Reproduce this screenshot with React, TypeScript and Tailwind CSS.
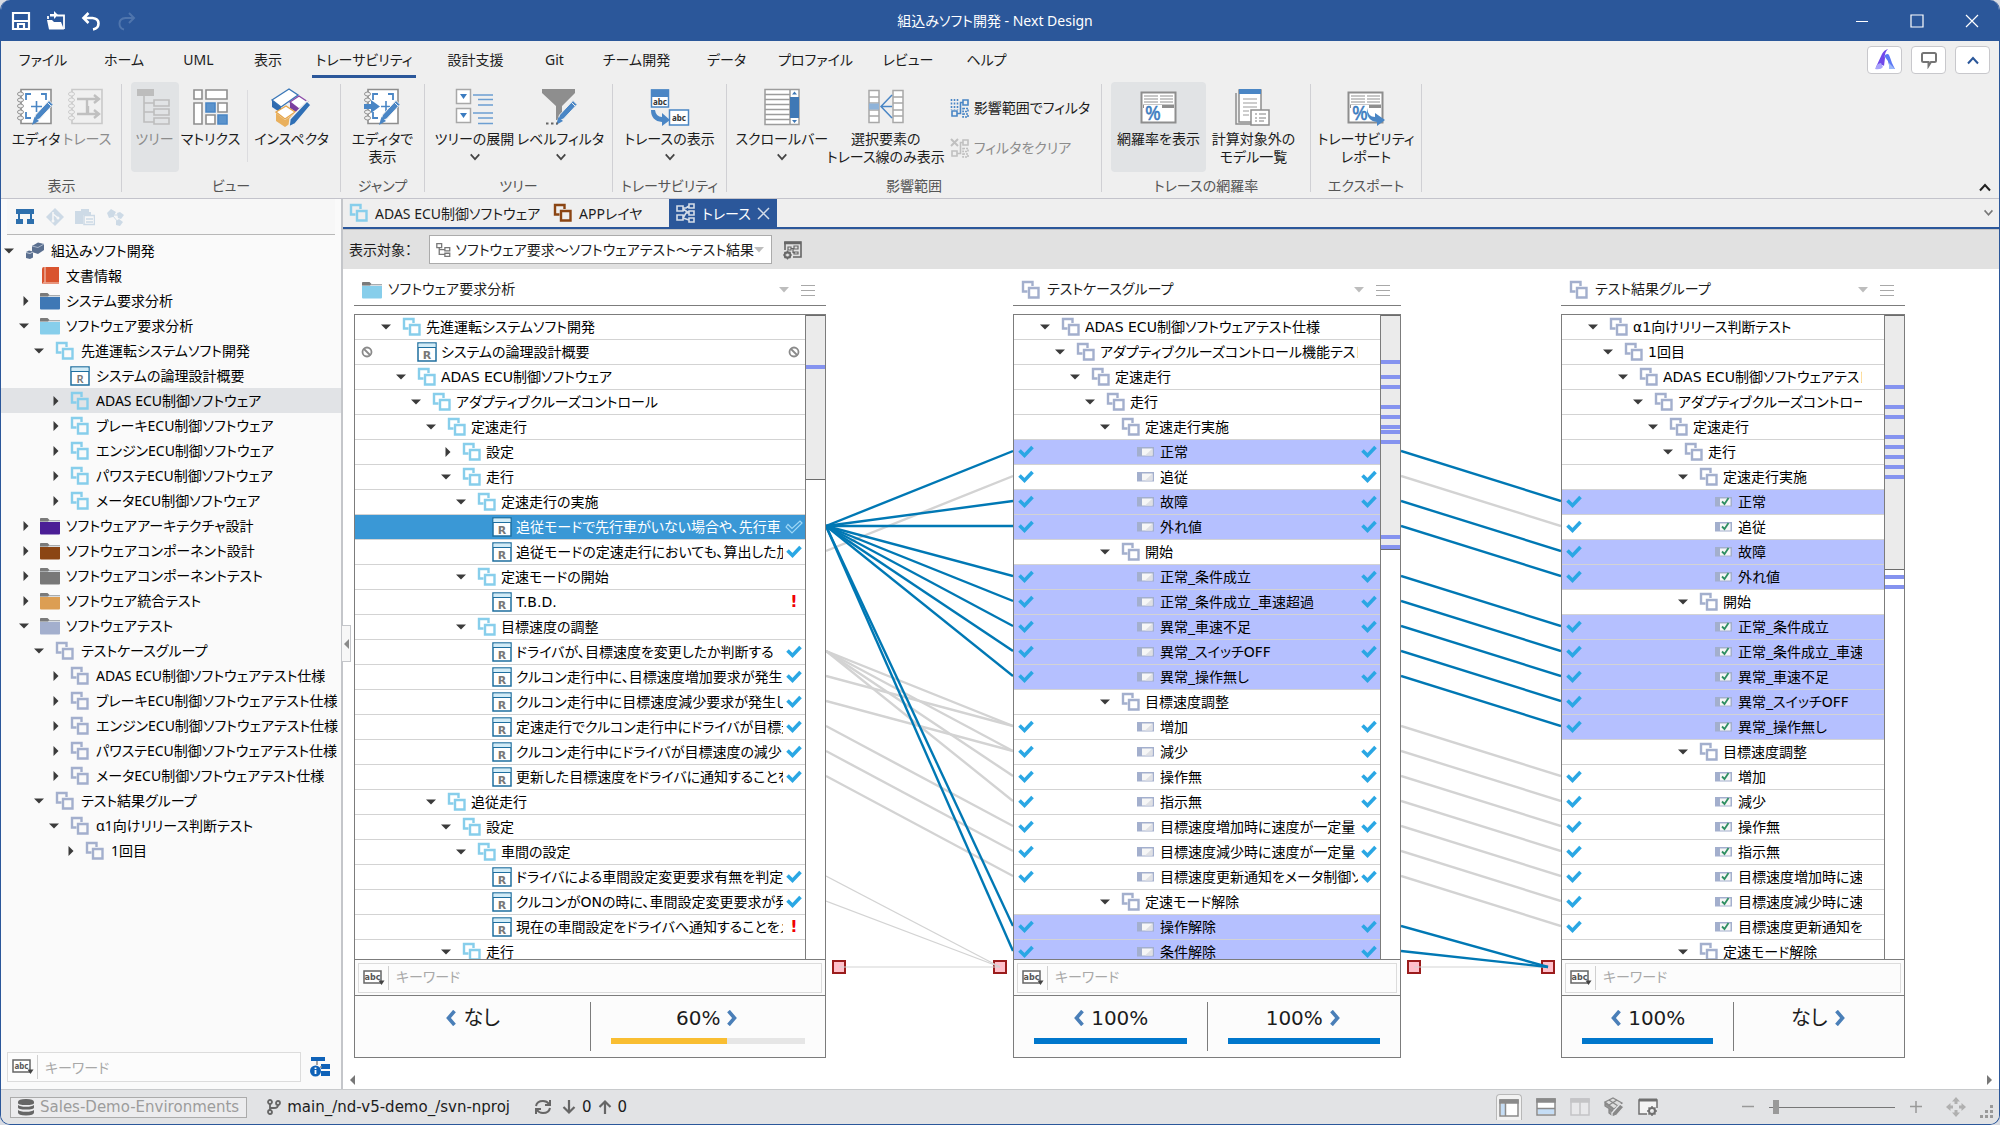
import type { ReactNode } from "react";
import { clsx } from "clsx";

type Icon = "model" | "group" | "brown" | "req" | "case" | "result" | "book" | "cubes" | "folder";
type Arrow = "open" | "closed" | "none";

type NavItem = { level: number; icon: Icon; label: string; arrow: Arrow; color?: string; selected?: boolean };

type Row = {
  level: number;
  icon: Icon;
  label: string;
  arrow?: Arrow;
  left?: Mark;
  right?: Mark;
  tone?: "selected" | "related";
};
type Mark = "check" | "outline" | "alert" | "skip";

/* ---------- small glyphs ---------- */

function Triangle({ arrow }: { arrow: Arrow }) {
  return (
    <span className={clsx("flex w-4 shrink-0 justify-center", arrow === "closed" && "pl-[3px]")}>
      {arrow === "open" && (
        <svg width="10" height="6" viewBox="0 0 10 6" aria-hidden="true">
          <path d="M0 0.5h10L5 5.5z" fill="#3b3b3b" />
        </svg>
      )}
      {arrow === "closed" && (
        <svg width="6" height="10" viewBox="0 0 6 10" aria-hidden="true">
          <path d="M0.5 0v10L5.5 5z" fill="#3b3b3b" />
        </svg>
      )}
    </span>
  );
}

function ModelIcon({ color }: { color: string }) {
  return (
    <svg width="20" height="20" viewBox="0 0 20 20" fill="none" stroke={color} strokeWidth="2.400" aria-hidden="true">
      <path d="M6.500 11.500H2V2h9.500v4" />
      <path d="M8 8h9.500v9.500H8z" />
    </svg>
  );
}

function FolderIcon({ color }: { color: string }) {
  return (
    <svg width="20" height="18" viewBox="0 0 20 18" aria-hidden="true">
      <path d="M0 1.500Q0 1 1 1h6.500l2 2H20v4H0z" fill="#7a7a7a" />
      <path d="M0 4.500h8l1-1H20V6H0z" fill="#d8dde2" />
      <path d="M0 5h20v11.500q0 1-1 1H1q-1 0-1-1z" fill={color} />
    </svg>
  );
}

function ItemIcon({ icon, color }: { icon: Icon; color?: string }) {
  switch (icon) {
    case "model":
      return <ModelIcon color="#87ceeb" />;
    case "group":
      return <ModelIcon color="#a3afcd" />;
    case "brown":
      return <ModelIcon color="#8b4513" />;
    case "folder":
      return <FolderIcon color={color ?? "#87ceeb"} />;
    case "book":
      return (
        <svg width="20" height="20" viewBox="0 0 20 20" aria-hidden="true">
          <path d="M2 3q0-2 2-2h15v17H4q-2 0-2-1z" fill="#d9542f" />
          <path d="M5 1v15.500M3 17h16" stroke="#f7d6cb" fill="none" />
        </svg>
      );
    case "cubes":
      return (
        <svg width="20" height="18" viewBox="0 0 20 18" aria-hidden="true">
          <path d="M7 4l6-3.500 6 1.500v6l-6 4-6-2z" fill="#5a6f8f" />
          <path d="M7 4l6 1.500L19 2" stroke="#a9b6ca" fill="none" />
          <path d="M1 10l3-1.500 4 1v6L5 17l-4-1z" fill="#5a6f8f" />
          <path d="M1 10.500l4 1 3-1.500" stroke="#c6cfdd" fill="none" />
        </svg>
      );
    case "req":
      return (
        <svg width="20" height="20" viewBox="0 0 20 20" aria-hidden="true">
          <path d="M1 1h18v18H1z" fill="#fff" stroke="#1f6f9f" strokeWidth="1.500" />
          <path d="M1.500 1.500h17v3.500h-17z" fill="#d3ecf7" />
          <path d="M1 5.500h18" stroke="#1f6f9f" />
          <text x="10" y="16.500" fontSize="11" fontWeight="600" textAnchor="middle" fill="#777">
            R
          </text>
        </svg>
      );
    case "case":
    case "result":
      return (
        <svg width="20" height="20" viewBox="0 0 20 20" aria-hidden="true">
          <path d="M1 5h17v9.500H1z" fill="#a3afcd" />
          <path d="M6 6.500h10.500v7H6z" fill="#f6f6f6" />
          {icon === "case" ? (
            <path d="M16.500 6.500v7H9z" fill="#dfe0e4" />
          ) : (
            <path d="M8 9.500l2.500 2.500 4-6" stroke="#2f8f62" strokeWidth="1.800" fill="none" />
          )}
        </svg>
      );
  }
}

function MarkIcon({ mark }: { mark: Mark }) {
  if (mark === "alert") return <b className="text-[16px] leading-none text-[#f00000]">!</b>;
  if (mark === "skip")
    return (
      <svg width="12" height="12" viewBox="0 0 12 12" fill="none" stroke="#8a8a8a" strokeWidth="1.800" aria-hidden="true">
        <circle cx="6" cy="6" r="4.500" />
        <path d="M3 3l6 6" />
      </svg>
    );
  if (mark === "outline")
    return (
      <svg width="18" height="14" viewBox="0 0 18 14" fill="none" aria-hidden="true">
        <path d="M1 7l2-2.500 4 4L15 1l2 2L7 13z" stroke="#9fd8f6" strokeWidth="1.200" />
      </svg>
    );
  return (
    <svg width="16" height="14" viewBox="0 0 16 14" fill="none" aria-hidden="true">
      <path d="M1.500 5.500l5 5L14.500 2" stroke="#2aa7e4" strokeWidth="3.600" />
    </svg>
  );
}

function Chevron({ dir, color = "#444", size = 14 }: { dir: "up" | "down"; color?: string; size?: number }) {
  return (
    <svg width={size} height={size / 2 + 2} viewBox="0 0 14 9" fill="none" stroke={color} strokeWidth="2" aria-hidden="true">
      <path d={dir === "up" ? "M2 7.500L7 2l5 5.500" : "M2 1.500L7 7l5-5.500"} />
    </svg>
  );
}

function AbcIcon() {
  return (
    <svg width="22" height="16" viewBox="0 0 22 16" aria-hidden="true">
      <path d="M1 1h17v12H1z" fill="#fff" stroke="#666" strokeWidth="1.500" />
      <text x="9.500" y="10" fontSize="8" fontWeight="700" textAnchor="middle" fill="#555">
        abc
      </text>
      <path d="M15.500 10.500h6L18.500 15z" fill="#444" />
    </svg>
  );
}

/* ---------- ribbon drawings ---------- */

function Pencil() {
  return (
    <g>
      <path d="M16.500 33l2-6L32 12.500l4 4L22.500 31z" fill="#4a86c5" stroke="#efefef" />
      <path d="M30.500 14.500l3.500 3.500" stroke="#efefef" />
      <path d="M15 37l2.500-8 4.500 4z" fill="#4a86c5" />
    </g>
  );
}

function Notebook({ faded, children }: { faded?: boolean; children: ReactNode }) {
  const line = faded ? "#c9c9c9" : "#8e8e8e";
  return (
    <svg width="38" height="38" viewBox="0 0 38 38" fill="none" aria-hidden="true">
      <path d="M4 1.500h30v34H4z" fill={faded ? "#f0f0f0" : "#fff"} stroke={line} strokeWidth="1.600" />
      {[5, 11, 17, 23, 29].map((y) => (
        <ellipse key={y} cx="3.500" cy={y + 1} rx="3" ry="2" fill="#efefef" stroke={line} />
      ))}
      {children}
    </svg>
  );
}

const corners = <path d="M9 12V6h5M24 6h5v6M9 24v6h5" stroke="#4a86c5" strokeWidth="1.800" />;

function CoverageIcon({ arrow }: { arrow?: boolean }) {
  return (
    <svg width="38" height="38" viewBox="0 0 38 38" fill="none" aria-hidden="true">
      <path d="M1.500 4.500h34v30h-34z" fill="#fff" stroke="#8e8e8e" strokeWidth="2" />
      <path d="M4 8h14M20 8h13M4 11h14M20 11h13M4 14h14M20 14h13" stroke="#b5b5b5" strokeWidth="1.500" />
      <path d="M3 16.500h31v3.500H3z" fill="#8e8e8e" />
      <path d="M4 17h18v16H4z" fill="#fff" />
      <text x="13" y="32" fontSize="19" textAnchor="middle" fill="#3b7cc0" stroke="#3b7cc0" strokeWidth="0.500">
        %
      </text>
      {arrow && <path d="M20 20q1 9 8 9v-4l10 7-8 6v-4q-11-1-10-14z" fill="#4a86c5" />}
    </svg>
  );
}

const drawings = {
  editor: (
    <Notebook>
      {corners}
      <path d="M19.500 13v11M14 18.500h11" stroke="#4a86c5" strokeWidth="1.600" />
      <Pencil />
    </Notebook>
  ),
  trace: (
    <Notebook faded>
      <path d="M9 11h4M9 26h11v-8M13 11h6v15h10M19 11h10M26 7l5 4-5 4M26 22l5 4-5 4" stroke="#c0c0c0" strokeWidth="2.400" />
    </Notebook>
  ),
  tree: (
    <svg width="38" height="38" viewBox="0 0 38 38" fill="none" stroke="#bdbdbd" strokeWidth="1.600" aria-hidden="true">
      <path d="M1 1h17v7H1z" fill="#bdbdbd" stroke="none" />
      <path d="M8 8v26h10M8 15h10M8 24h10M18 12h15v6H18zM18 21h15v6H18zM18 30h15v6H18z" />
    </svg>
  ),
  matrix: (
    <svg width="38" height="38" viewBox="0 0 38 38" fill="#fff" stroke="#8e8e8e" strokeWidth="1.600" aria-hidden="true">
      <path d="M2 2h8v9H2zM14 2h21v9H14zM2 15h8v21H2zM26 15h9v9h-9zM14 27h9v9h-9z" />
      <path d="M14 15h9v9h-9zM26 27h9v9h-9z" fill="#5b93cc" stroke="#4a86c5" />
    </svg>
  ),
  inspector: (
    <svg width="42" height="40" viewBox="0 0 42 40" strokeWidth="1.400" aria-hidden="true">
      <path d="M1 12L18 1l9 6L10 19z" fill="#fff" stroke="#3b78b8" />
      <path d="M1 12l9 7v6l-9-6z" fill="#2f6bb0" />
      <path d="M19 14l9-6 9 6-9 7z" fill="#fff" stroke="#8a4aa8" />
      <path d="M19 14l9 7v5l-9-6z" fill="#7a3f9e" />
      <path d="M5 24l10-6 9 6-10 7z" fill="#fff" stroke="#e6a64c" />
      <path d="M5 25l9 7v7l-9-6zM14 32l9-6v7l-9 6z" fill="#e9b05d" />
      <path d="M19 31L36 13l4 4-16 19-6 3z" fill="#2f6fb5" stroke="#efefef" />
    </svg>
  ),
  jump: (
    <Notebook>
      {corners}
      <path d="M22 13v11M17 18.500h9" stroke="#4a86c5" strokeWidth="1.600" />
      <path d="M0 16h7v-4l9 6.500-9 6.500v-4H0z" fill="#4a86c5" />
      <Pencil />
    </Notebook>
  ),
  expand: (
    <svg width="40" height="38" viewBox="0 0 40 38" fill="none" aria-hidden="true">
      <path d="M1.500 1.500h14v14h-14zM1.500 20.500h14v14h-14z" fill="#fff" stroke="#a8a8a8" strokeWidth="1.500" />
      <path d="M5 6h7l-3.500 5zM5 25h7l-3.500 5z" fill="#3b7cc0" />
      <path d="M18 7h20M23 11.500h15M23 17h15M18 25h20M23 30h15M23 35.500h15" stroke="#6c9fd2" strokeWidth="1.500" />
    </svg>
  ),
  filter: (
    <svg width="40" height="38" viewBox="0 0 40 38" fill="none" aria-hidden="true">
      <path d="M1 1h33v4L21 18v14h-6V18L1 5z" fill="#8e8e8e" />
      <Pencil />
      <path d="M5 35.500h2.500M10 35.500h2.500M15 35.500h2" stroke="#666" strokeWidth="2" />
    </svg>
  ),
  labels: (
    <svg width="40" height="38" viewBox="0 0 40 38" fill="none" aria-hidden="true">
      <path d="M1.500 2h17v17h-17z" fill="#fff" stroke="#4a86c5" strokeWidth="1.500" />
      <path d="M1 1.500h18V9H1z" fill="#4a86c5" />
      <path d="M19.500 22h19v15h-19z" fill="#fff" stroke="#4a86c5" strokeWidth="1.500" />
      <path d="M1 22h4q1 7 7 7v-4l8 7-8 6v-4Q1 33 1 22z" fill="#4a86c5" />
      <text x="10" y="16.500" fontSize="8" fontWeight="700" textAnchor="middle" fill="#333">
        abc
      </text>
      <text x="29" y="33" fontSize="8" fontWeight="700" textAnchor="middle" fill="#333">
        abc
      </text>
    </svg>
  ),
  scrollbar: (
    <svg width="38" height="38" viewBox="0 0 38 38" fill="#fff" stroke="#9c9c9c" strokeWidth="1.500" aria-hidden="true">
      <path d="M2 1.500h34v35H2zM27 1.500v35M2 6.500h25M2 11.500h25M2 16.500h25M2 21.500h25M2 26.500h25M2 31.500h25" />
      <path d="M27 9h9v21h-9zM29 6.500l2.500-3 2.500 3zM29 32h5l-2.500 3z" fill="#3f78b5" stroke="none" />
    </svg>
  ),
  fan: (
    <svg width="38" height="38" viewBox="0 0 38 38" fill="#fff" stroke="#a8a8a8" strokeWidth="1.500" aria-hidden="true">
      <path d="M2 2.500h10v32H2zM26 2.500h10v32H26zM2 9h10M2 15h10M2 22h10M2 28h10M26 9h10M26 15h10M26 22h10M26 28h10" />
      <path d="M2 15.500h10v6H2z" fill="#8fb3d9" stroke="none" />
      <path d="M25 7L14 18.500 25 30M14 18.500h11" fill="none" stroke="#4a86c5" />
    </svg>
  ),
  coverage: <CoverageIcon />,
  excluded: (
    <svg width="38" height="38" viewBox="0 0 38 38" fill="#fff" stroke="#8e8e8e" strokeWidth="1.500" aria-hidden="true">
      <path d="M1 5v31h27" fill="none" />
      <path d="M4 2h22v32H4z" />
      <path d="M4 1h22v5H4z" fill="#4a86c5" stroke="none" />
      <path d="M8 11h14M8 15h14M8 19h14M8 23h6M8 27h6" stroke="#bdbdbd" />
      <path d="M16 22h18v15H16z" />
      <path d="M20 26h2M24 26h7M20 30h2M24 30h7M20 33h2M24 33h5" stroke="#aaa" />
    </svg>
  ),
  report: <CoverageIcon arrow />,
};

function RangeIcon({ clear }: { clear?: boolean }) {
  const c = clear ? "#c0c0c0" : "#4a86c5";
  return (
    <svg width="20" height="20" viewBox="0 0 20 20" fill="none" stroke={c} strokeWidth="1.600" aria-hidden="true">
      <path d="M13 2h5v5h-5zM2 13h5v5H2zM7 15.500h3.500v-11H13" />
      <path d="M13 10.500h5v3h-5zM13 16h5v3h-5z" strokeDasharray="2 1" />
      {clear ? <path d="M1 1l7 7M8 1L1 8" strokeWidth="2" /> : <path d="M1.500 1v11M4.500 1v11M7.500 1v11" strokeDasharray="2 1.500" />}
    </svg>
  );
}

/* ---------- ribbon ---------- */

function RibbonButton({
  drawing,
  lines,
  width,
  drop,
  active,
  muted,
}: {
  drawing: keyof typeof drawings;
  lines: string[];
  width: string;
  drop?: boolean;
  active?: boolean;
  muted?: boolean;
}) {
  return (
    <button
      type="button"
      className={clsx(
        "flex h-[90px] shrink-0 flex-col items-center rounded pt-[6px] leading-[18px] whitespace-nowrap",
        width,
        active && "bg-[#e1e3e5]",
        muted ? "text-[#8c8c8c]" : "text-[#1c1c1c]",
      )}
    >
      <span className="flex h-[42px] items-start">{drawings[drawing]}</span>
      {lines.map((line) => (
        <span key={line}>{line}</span>
      ))}
      {drop && (
        <span className="flex h-[18px] items-center">
          <Chevron dir="down" size={12} />
        </span>
      )}
    </button>
  );
}

function RibbonGroup({ label, width, children }: { label: string; width: string; children: ReactNode }) {
  return (
    <section aria-label={label} className={clsx("mt-1 flex h-[108px] shrink-0 flex-col border-r border-[#d0d0d4]", width)}>
      <div className="-mt-[2px] flex flex-1 justify-center">{children}</div>
      <p className="text-center leading-3 whitespace-nowrap text-[#555]">{label}</p>
    </section>
  );
}

const menu = [
  { label: "ファイル", width: "w-[84px]" },
  { label: "ホーム", width: "w-[78px]" },
  { label: "UML", width: "w-[71px]" },
  { label: "表示", width: "w-[68px]" },
  { label: "トレーサビリティ", width: "w-[124px]", active: true },
  { label: "設計支援", width: "w-[99px]" },
  { label: "Git", width: "w-[59px]" },
  { label: "チーム開発", width: "w-[105px]" },
  { label: "データ", width: "w-[75px]" },
  { label: "プロファイル", width: "w-[103px]" },
  { label: "レビュー", width: "w-[82px]" },
  { label: "ヘルプ", width: "w-[75px]" },
];

function TitleBar() {
  return (
    <header className="flex h-[41px] shrink-0 items-center bg-[#2b579a] text-white">
      <div className="flex flex-1 items-center gap-[15px] pl-[10px]">
        <button type="button" aria-label="保存">
          <svg width="20" height="20" viewBox="0 0 20 20" fill="none" stroke="#fff" strokeWidth="2.200" aria-hidden="true">
            <path d="M2 2h16v16H2zM2 10h16M7 18v-5h6v5" />
          </svg>
        </button>
        <button type="button" aria-label="開く">
          <svg width="20" height="20" viewBox="0 0 20 20" aria-hidden="true">
            <path d="M2 8V5M11 4.500h7V18" fill="none" stroke="#fff" strokeWidth="1.800" />
            <path d="M1 9h5l2 2h7l3 7.500H3zM4 3h4V0l4 4-4 4V5.500H4z" fill="#fff" />
          </svg>
        </button>
        <button type="button" aria-label="元に戻す">
          <svg width="20" height="20" viewBox="0 0 20 20" fill="none" stroke="#fff" strokeWidth="2.600" aria-hidden="true">
            <path d="M7.500 2L2.500 7l5 5M3 7h8.500q6 .5 6 5.500t-5.500 6" />
          </svg>
        </button>
        <button type="button" aria-label="やり直し" disabled>
          <svg width="20" height="20" viewBox="0 0 20 20" fill="none" stroke="#4f75ad" strokeWidth="2" aria-hidden="true">
            <path d="M13 2l5 5-5 5M17 7H9.500q-6 .5-6 5.500t4.500 6" />
          </svg>
        </button>
      </div>
      <h1 className="whitespace-nowrap">組込みソフト開発 - Next Design</h1>
      <div className="flex flex-1 items-center justify-end gap-[41px] pr-[20px]">
        <button type="button" aria-label="最小化">
          <svg width="14" height="14" viewBox="0 0 14 14" stroke="#fff" strokeWidth="1.200" aria-hidden="true">
            <path d="M1 7.500h12" />
          </svg>
        </button>
        <button type="button" aria-label="最大化">
          <svg width="14" height="14" viewBox="0 0 14 14" fill="none" stroke="#fff" strokeWidth="1.200" aria-hidden="true">
            <path d="M1 1h12v12H1z" />
          </svg>
        </button>
        <button type="button" aria-label="閉じる">
          <svg width="14" height="14" viewBox="0 0 14 14" stroke="#fff" strokeWidth="1.200" aria-hidden="true">
            <path d="M1 1l12 12M13 1L1 13" />
          </svg>
        </button>
      </div>
    </header>
  );
}

function Ribbon() {
  const square = "flex h-[28px] w-[35px] items-center justify-center rounded border border-[#c8c8cc] bg-white";
  return (
    <div className="shrink-0 border-b border-[#c3c3cb]">
      <nav className="flex h-[39px] items-start">
        {menu.map((m) => (
          <a key={m.label} href="#" className={clsx("flex h-[37px] shrink-0 justify-center whitespace-nowrap", m.width)}>
            <span className={clsx("border-b-[3px] px-1 pt-2", m.active ? "border-[#2b579a]" : "border-transparent")}>{m.label}</span>
          </a>
        ))}
        <div className="ml-auto flex gap-[9px] pt-[5px] pr-[9px]">
          <button type="button" aria-label="AI アシスタント" className={square}>
            <svg width="20" height="22" viewBox="0 0 20 22" aria-hidden="true">
              <path d="M7 5q2-4 6-5-4 4-3 9l-1 8q-2-2-4 0-3 2-4 1z" fill="#7048ea" />
              <path d="M10 6q3-2 4 0 1 2 3 8l3 6q-5 0-6-4-1-5-4-8z" fill="#5c78f5" />
              <path d="M0 20q2-6 6-6l2 4q-2 3-8 2z" fill="#a9a4fb" />
              <path d="M14 14l6 6h-6z" fill="#9cb8fa" />
            </svg>
          </button>
          <button type="button" aria-label="コメント" className={square}>
            <svg width="18" height="18" viewBox="0 0 18 18" fill="none" stroke="#757575" strokeWidth="2" aria-hidden="true">
              <path d="M3.500 2h11q1.500 0 1.500 1.500v6q0 1.500-1.500 1.500H11l-2.500 4V11h-5Q2 11 2 9.500v-6Q2 2 3.500 2z" />
            </svg>
          </button>
          <button type="button" aria-label="リボン" className={square}>
            <Chevron dir="up" color="#2b579a" />
          </button>
        </div>
      </nav>
      <div className="flex h-[118px] pl-px">
        <RibbonGroup label="表示" width="w-[120px]">
          <RibbonButton drawing="editor" lines={["エディタ"]} width="w-[51px]" />
          <RibbonButton drawing="trace" lines={["トレース"]} width="w-[51px]" muted />
        </RibbonGroup>
        <RibbonGroup label="ビュー" width="w-[219px]">
          <RibbonButton drawing="tree" lines={["ツリー"]} width="w-[48px]" active muted />
          <RibbonButton drawing="matrix" lines={["マトリクス"]} width="w-[64px]" />
          <div className="mx-1 mt-2 h-[72px] w-px bg-[#dcdcdf]" />
          <RibbonButton drawing="inspector" lines={["インスペクタ"]} width="w-[80px]" />
        </RibbonGroup>
        <RibbonGroup label="ジャンプ" width="w-[84px]">
          <RibbonButton drawing="jump" lines={["エディタで", "表示"]} width="w-[76px]" />
        </RibbonGroup>
        <RibbonGroup label="ツリー" width="w-[188px]">
          <RibbonButton drawing="expand" lines={["ツリーの展開"]} width="w-[84px]" drop />
          <RibbonButton drawing="filter" lines={["レベルフィルタ"]} width="w-[88px]" drop />
        </RibbonGroup>
        <RibbonGroup label="トレーサビリティ" width="w-[114px]">
          <RibbonButton drawing="labels" lines={["トレースの表示"]} width="w-[100px]" drop />
        </RibbonGroup>
        <RibbonGroup label="影響範囲" width="w-[375px]">
          <RibbonButton drawing="scrollbar" lines={["スクロールバー"]} width="w-[88px]" drop />
          <RibbonButton drawing="fan" lines={["選択要素の", "トレース線のみ表示"]} width="w-[120px]" />
          <div className="ml-1 flex flex-col gap-5 pt-[16px] whitespace-nowrap">
            <button type="button" className="flex items-center gap-[4px] leading-5">
              <RangeIcon />
              影響範囲でフィルタ
            </button>
            <button type="button" className="flex items-center gap-[4px] leading-5 text-[#8c8c8c]" disabled>
              <RangeIcon clear />
              フィルタをクリア
            </button>
          </div>
        </RibbonGroup>
        <RibbonGroup label="トレースの網羅率" width="w-[209px]">
          <RibbonButton drawing="coverage" lines={["網羅率を表示"]} width="w-[95px]" active />
          <RibbonButton drawing="excluded" lines={["計算対象外の", "モデル一覧"]} width="w-[95px]" />
        </RibbonGroup>
        <RibbonGroup label="エクスポート" width="w-[111px]">
          <RibbonButton drawing="report" lines={["トレーサビリティ", "レポート"]} width="w-[100px]" />
        </RibbonGroup>
        <button type="button" aria-label="リボンを折りたたむ" className="mt-auto mr-[7px] mb-[6px] ml-auto">
          <Chevron dir="up" color="#222" />
        </button>
      </div>
    </div>
  );
}

/* ---------- navigator ---------- */

const nav: NavItem[] = [
  { level: 0, icon: "cubes", label: "組込みソフト開発", arrow: "open" },
  { level: 1, icon: "book", label: "文書情報", arrow: "none" },
  { level: 1, icon: "folder", color: "#3f78b5", label: "システム要求分析", arrow: "closed" },
  { level: 1, icon: "folder", color: "#87ceeb", label: "ソフトウェア要求分析", arrow: "open" },
  { level: 2, icon: "model", label: "先進運転システムソフト開発", arrow: "open" },
  { level: 3, icon: "req", label: "システムの論理設計概要", arrow: "none" },
  { level: 3, icon: "model", label: "ADAS ECU制御ソフトウェア", arrow: "closed", selected: true },
  { level: 3, icon: "model", label: "ブレーキECU制御ソフトウェア", arrow: "closed" },
  { level: 3, icon: "model", label: "エンジンECU制御ソフトウェア", arrow: "closed" },
  { level: 3, icon: "model", label: "パワステECU制御ソフトウェア", arrow: "closed" },
  { level: 3, icon: "model", label: "メータECU制御ソフトウェア", arrow: "closed" },
  { level: 1, icon: "folder", color: "#4b1e96", label: "ソフトウェアアーキテクチャ設計", arrow: "closed" },
  { level: 1, icon: "folder", color: "#8b4513", label: "ソフトウェアコンポーネント設計", arrow: "closed" },
  { level: 1, icon: "folder", color: "#787878", label: "ソフトウェアコンポーネントテスト", arrow: "closed" },
  { level: 1, icon: "folder", color: "#dc9e53", label: "ソフトウェア統合テスト", arrow: "closed" },
  { level: 1, icon: "folder", color: "#a3afcd", label: "ソフトウェアテスト", arrow: "open" },
  { level: 2, icon: "group", label: "テストケースグループ", arrow: "open" },
  { level: 3, icon: "group", label: "ADAS ECU制御ソフトウェアテスト仕様", arrow: "closed" },
  { level: 3, icon: "group", label: "ブレーキECU制御ソフトウェアテスト仕様", arrow: "closed" },
  { level: 3, icon: "group", label: "エンジンECU制御ソフトウェアテスト仕様", arrow: "closed" },
  { level: 3, icon: "group", label: "パワステECU制御ソフトウェアテスト仕様", arrow: "closed" },
  { level: 3, icon: "group", label: "メータECU制御ソフトウェアテスト仕様", arrow: "closed" },
  { level: 2, icon: "group", label: "テスト結果グループ", arrow: "open" },
  { level: 3, icon: "group", label: "α1向けリリース判断テスト", arrow: "open" },
  { level: 4, icon: "group", label: "1回目", arrow: "closed" },
];

function KeywordBox({ label }: { label: string }) {
  return (
    <div className="flex h-[30px] min-w-0 flex-1 items-center border border-[#dcdcdc] bg-[#fcfcfc]">
      <button type="button" aria-label="検索条件" className="flex h-[24px] w-[30px] shrink-0 items-center justify-center border-r border-[#d0d0d0]">
        <AbcIcon />
      </button>
      <input
        type="text"
        aria-label={label}
        placeholder="キーワード"
        className="min-w-0 flex-1 bg-transparent px-[7px] outline-none placeholder:text-[#a8a8a8]"
      />
    </div>
  );
}

function Navigator() {
  return (
    <aside className="relative flex w-[342px] shrink-0 flex-col border-r-2 border-[#c4c6ca] bg-[#fafafa]">
      <div className="mx-[6px] flex h-[36px] items-center gap-[10px] border-b border-[#b8b8b8] bg-[#f7f7f7] pl-[8px]">
        <button type="button" aria-label="モデル">
          <svg width="20" height="20" viewBox="0 0 20 20" fill="#2d6fad" aria-hidden="true">
            <path d="M1 2h18v5H1zM3 7h2v6H3zM15 7h2v6h-2zM1 12h7v5H1zM12 12h7v5h-7zM8 3h4v2H8z" />
          </svg>
        </button>
        <button type="button" aria-label="Git">
          <svg width="20" height="20" viewBox="0 0 20 20" aria-hidden="true">
            <path d="M10 1l9 9-9 9-9-9z" fill="#cddae6" />
            <path d="M8 5v10M8 7l5 4" stroke="#f7f7f7" strokeWidth="1.500" />
            <circle cx="8" cy="14" r="1.500" fill="#f7f7f7" />
            <circle cx="13" cy="11" r="1.500" fill="#f7f7f7" />
          </svg>
        </button>
        <button type="button" aria-label="プロファイル">
          <svg width="20" height="20" viewBox="0 0 20 20" aria-hidden="true">
            <path d="M0 4h6V2h8v3h2v3H8v9H0z" fill="#cddae6" />
            <path d="M9 8.500h10.500v9H9zM11 12h7M11 15h7" fill="#f7f7f7" stroke="#cddae6" strokeWidth="1.500" />
          </svg>
        </button>
        <button type="button" aria-label="プロダクトライン">
          <svg width="20" height="20" viewBox="0 0 20 20" aria-hidden="true">
            <path d="M2 6l4-4 5 3-3 5-4 1zM12 6l3-1 4 3-3 4-3-1zM11 14l3-2 4 3-3 4-4-1z" fill="#cddae6" />
            <path d="M8 8h6M8 9l5 6" stroke="#cddae6" fill="none" />
          </svg>
        </button>
      </div>
      <ul className="min-h-0 flex-1 overflow-hidden pt-[3px]">
        {nav.map((item) => (
          <li
            key={item.label}
            className={clsx("flex h-[25px] items-center whitespace-nowrap text-black", item.selected && "bg-[#e1e3e6]")}
          >
            <span className="shrink-0" style={{ width: item.level * 15 }} />
            <Triangle arrow={item.arrow} />
            <span className="mr-[6px] ml-[8px] flex w-5 shrink-0 justify-center">
              <ItemIcon icon={item.icon} color={item.color} />
            </span>
            {item.label}
          </li>
        ))}
      </ul>
      <div className="flex items-center gap-[9px] pr-[11px] pb-[7px] pl-[6px]">
        <KeywordBox label="モデルを検索" />
        <button type="button" aria-label="詳細">
          <svg width="20" height="20" viewBox="0 0 20 20" fill="#0f62b8" aria-hidden="true">
            <path d="M1 0h14v4H1zM11 7h9v5h-9zM11 14h9v5h-9z" />
            <path d="M7 4v4M10 10h2" stroke="#888" strokeWidth="1.500" />
            <circle cx="5.500" cy="14" r="5.500" />
            <path d="M5.500 13v4M5.500 10.500v1.500" stroke="#fff" strokeWidth="1.800" />
          </svg>
        </button>
      </div>
      <button
        type="button"
        aria-label="ナビゲータを折りたたむ"
        className="absolute -right-[10px] top-[426px] flex h-[37px] w-[10px] items-center justify-center border border-[#c4c6ca] bg-[#f7f7f7]"
      >
        <svg width="5" height="10" viewBox="0 0 5 10" aria-hidden="true">
          <path d="M5 0v10L0 5z" fill="#8a8a8a" />
        </svg>
      </button>
    </aside>
  );
}

/* ---------- trace panels ---------- */

const requirements: Row[] = [
  { level: 0, icon: "model", label: "先進運転システムソフト開発", arrow: "open" },
  { level: 1, icon: "req", label: "システムの論理設計概要", left: "skip", right: "skip" },
  { level: 1, icon: "model", label: "ADAS ECU制御ソフトウェア", arrow: "open" },
  { level: 2, icon: "model", label: "アダプティブクルーズコントロール", arrow: "open" },
  { level: 3, icon: "model", label: "定速走行", arrow: "open" },
  { level: 4, icon: "model", label: "設定", arrow: "closed" },
  { level: 4, icon: "model", label: "走行", arrow: "open" },
  { level: 5, icon: "model", label: "定速走行の実施", arrow: "open" },
  { level: 6, icon: "req", label: "追従モードで先行車がいない場合や、先行車", right: "outline", tone: "selected" },
  { level: 6, icon: "req", label: "追従モードの定速走行においても、算出した加", right: "check" },
  { level: 5, icon: "model", label: "定速モードの開始", arrow: "open" },
  { level: 6, icon: "req", label: "T.B.D.", right: "alert" },
  { level: 5, icon: "model", label: "目標速度の調整", arrow: "open" },
  { level: 6, icon: "req", label: "ドライバが、目標速度を変更したか判断する", right: "check" },
  { level: 6, icon: "req", label: "クルコン走行中に、目標速度増加要求が発生", right: "check" },
  { level: 6, icon: "req", label: "クルコン走行中に目標速度減少要求が発生し", right: "check" },
  { level: 6, icon: "req", label: "定速走行でクルコン走行中にドライバが目標速", right: "check" },
  { level: 6, icon: "req", label: "クルコン走行中にドライバが目標速度の減少を", right: "check" },
  { level: 6, icon: "req", label: "更新した目標速度をドライバに通知することをメ", right: "check" },
  { level: 3, icon: "model", label: "追従走行", arrow: "open" },
  { level: 4, icon: "model", label: "設定", arrow: "open" },
  { level: 5, icon: "model", label: "車間の設定", arrow: "open" },
  { level: 6, icon: "req", label: "ドライバによる車間設定変更要求有無を判定", right: "check" },
  { level: 6, icon: "req", label: "クルコンがONの時に、車間設定変更要求が発", right: "check" },
  { level: 6, icon: "req", label: "現在の車間設定をドライバへ通知することをメー", right: "alert" },
  { level: 4, icon: "model", label: "走行", arrow: "open" },
];

const testCases: Row[] = [
  { level: 0, icon: "group", label: "ADAS ECU制御ソフトウェアテスト仕様", arrow: "open" },
  { level: 1, icon: "group", label: "アダプティブクルーズコントロール機能テスト仕様", arrow: "open" },
  { level: 2, icon: "group", label: "定速走行", arrow: "open" },
  { level: 3, icon: "group", label: "走行", arrow: "open" },
  { level: 4, icon: "group", label: "定速走行実施", arrow: "open" },
  { level: 5, icon: "case", label: "正常", left: "check", right: "check", tone: "related" },
  { level: 5, icon: "case", label: "追従", left: "check", right: "check" },
  { level: 5, icon: "case", label: "故障", left: "check", right: "check", tone: "related" },
  { level: 5, icon: "case", label: "外れ値", left: "check", right: "check", tone: "related" },
  { level: 4, icon: "group", label: "開始", arrow: "open" },
  { level: 5, icon: "case", label: "正常_条件成立", left: "check", right: "check", tone: "related" },
  { level: 5, icon: "case", label: "正常_条件成立_車速超過", left: "check", right: "check", tone: "related" },
  { level: 5, icon: "case", label: "異常_車速不足", left: "check", right: "check", tone: "related" },
  { level: 5, icon: "case", label: "異常_スイッチOFF", left: "check", right: "check", tone: "related" },
  { level: 5, icon: "case", label: "異常_操作無し", left: "check", right: "check", tone: "related" },
  { level: 4, icon: "group", label: "目標速度調整", arrow: "open" },
  { level: 5, icon: "case", label: "増加", left: "check", right: "check" },
  { level: 5, icon: "case", label: "減少", left: "check", right: "check" },
  { level: 5, icon: "case", label: "操作無", left: "check", right: "check" },
  { level: 5, icon: "case", label: "指示無", left: "check", right: "check" },
  { level: 5, icon: "case", label: "目標速度増加時に速度が一定量", left: "check", right: "check" },
  { level: 5, icon: "case", label: "目標速度減少時に速度が一定量", left: "check", right: "check" },
  { level: 5, icon: "case", label: "目標速度更新通知をメータ制御ソ", left: "check", right: "check" },
  { level: 4, icon: "group", label: "定速モード解除", arrow: "open" },
  { level: 5, icon: "case", label: "操作解除", left: "check", right: "check", tone: "related" },
  { level: 5, icon: "case", label: "条件解除", left: "check", right: "check", tone: "related" },
];

const testResults: Row[] = [
  { level: 0, icon: "group", label: "α1向けリリース判断テスト", arrow: "open" },
  { level: 1, icon: "group", label: "1回目", arrow: "open" },
  { level: 2, icon: "group", label: "ADAS ECU制御ソフトウェアテスト", arrow: "open" },
  { level: 3, icon: "group", label: "アダプティブクルーズコントロール機", arrow: "open" },
  { level: 4, icon: "group", label: "定速走行", arrow: "open" },
  { level: 5, icon: "group", label: "走行", arrow: "open" },
  { level: 6, icon: "group", label: "定速走行実施", arrow: "open" },
  { level: 7, icon: "result", label: "正常", left: "check", tone: "related" },
  { level: 7, icon: "result", label: "追従", left: "check" },
  { level: 7, icon: "result", label: "故障", left: "check", tone: "related" },
  { level: 7, icon: "result", label: "外れ値", left: "check", tone: "related" },
  { level: 6, icon: "group", label: "開始", arrow: "open" },
  { level: 7, icon: "result", label: "正常_条件成立", left: "check", tone: "related" },
  { level: 7, icon: "result", label: "正常_条件成立_車速", left: "check", tone: "related" },
  { level: 7, icon: "result", label: "異常_車速不足", left: "check", tone: "related" },
  { level: 7, icon: "result", label: "異常_スイッチOFF", left: "check", tone: "related" },
  { level: 7, icon: "result", label: "異常_操作無し", left: "check", tone: "related" },
  { level: 6, icon: "group", label: "目標速度調整", arrow: "open" },
  { level: 7, icon: "result", label: "増加", left: "check" },
  { level: 7, icon: "result", label: "減少", left: "check" },
  { level: 7, icon: "result", label: "操作無", left: "check" },
  { level: 7, icon: "result", label: "指示無", left: "check" },
  { level: 7, icon: "result", label: "目標速度増加時に速", left: "check" },
  { level: 7, icon: "result", label: "目標速度減少時に速", left: "check" },
  { level: 7, icon: "result", label: "目標速度更新通知を", left: "check" },
  { level: 6, icon: "group", label: "定速モード解除", arrow: "open" },
];

function TraceRow({ row }: { row: Row }) {
  return (
    <li
      className={clsx(
        "flex h-[25px] items-center border-b border-[#d3d3d3] whitespace-nowrap",
        row.tone === "selected" && "bg-[#3a98d6] text-white",
        row.tone === "related" && "bg-[#b5c0ff] text-black",
        !row.tone && "text-black",
      )}
    >
      <span className="flex w-[23px] shrink-0 justify-center">{row.left && <MarkIcon mark={row.left} />}</span>
      <span className="shrink-0" style={{ width: row.level * 15 }} />
      <Triangle arrow={row.arrow ?? "none"} />
      <span className="mr-[4px] ml-[8px] flex w-5 shrink-0 justify-center">
        <ItemIcon icon={row.icon} />
      </span>
      <span className="min-w-0 flex-1 overflow-hidden">{row.label}</span>
      <span className="flex w-[22px] shrink-0 justify-center">{row.right && <MarkIcon mark={row.right} />}</span>
    </li>
  );
}

type Coverage = { text: string; value?: number; low?: boolean };

function CoverageCell({ side, data }: { side: "left" | "right"; data: Coverage }) {
  const arrow = (
    <svg width="13" height="16" viewBox="0 0 13 16" fill="none" stroke="#4a7fb8" strokeWidth="3.600" aria-hidden="true">
      <path d={side === "left" ? "M10.500 1L4.500 8l6 7" : "M2.500 1l6 7-6 7"} />
    </svg>
  );
  return (
    <div className="flex flex-1 flex-col px-5 pt-[7px]">
      <button type="button" className="flex items-center justify-center gap-[6px] text-[20px] leading-[30px] text-[#1c1c1c]">
        {side === "left" && arrow}
        {data.text}
        {side === "right" && arrow}
      </button>
      {data.value !== undefined && (
        <div className="mt-[5px] h-[6px] bg-[#e6e6e6]">
          <div className={clsx("h-full", data.low ? "bg-[#f9be32]" : "bg-[#0077cc]")} style={{ width: `${data.value}%` }} />
        </div>
      )}
    </div>
  );
}

function TracePanel({
  icon,
  title,
  rows,
  thumb,
  hits,
  left,
  right,
}: {
  icon: Icon;
  title: string;
  rows: Row[];
  thumb: number;
  hits: number[];
  left: Coverage;
  right: Coverage;
}) {
  return (
    <section className="flex min-h-0 min-w-0 flex-col">
      <div className="mb-[8px] flex h-[37px] shrink-0 items-center border-b border-[#7c7c7c] pt-[5px] pr-[11px] pl-[8px]">
        <span className="mr-[6px] flex w-5 shrink-0 justify-center">
          <ItemIcon icon={icon} />
        </span>
        <h2 className="flex-1 truncate">{title}</h2>
        <button type="button" aria-label="表示モデルを選択">
          <svg width="10" height="6" viewBox="0 0 10 6" aria-hidden="true">
            <path d="M0 0h10L5 5.500z" fill="#bdbdbd" />
          </svg>
        </button>
        <button type="button" aria-label="メニュー" className="ml-[12px]">
          <svg width="14" height="14" viewBox="0 0 14 14" stroke="#a8a8a8" aria-hidden="true">
            <path d="M0 2.500h14M0 7.500h14M0 12.500h14" />
          </svg>
        </button>
      </div>
      <div className="flex min-h-0 flex-1 flex-col border border-[#7c7c7c]">
        <div className="flex min-h-0 flex-1">
          <ul className="min-w-0 flex-1 overflow-hidden">
            {rows.map((row, i) => (
              <TraceRow key={i} row={row} />
            ))}
          </ul>
          <div className="relative w-[20px] shrink-0 border-l border-[#7c7c7c] bg-white">
            <div className="border-y border-[#6c6c6c] bg-[#ebebeb]" style={{ height: thumb }} />
            {hits.map((y) => (
              <span key={y} className="absolute left-0 h-[4px] w-full bg-[#8593ef]" style={{ top: y }} />
            ))}
          </div>
        </div>
        <div className="flex h-[36px] shrink-0 items-center border-t border-[#7c7c7c] bg-[#fcfcfc] px-[3px]">
          <KeywordBox label={`${title}を検索`} />
        </div>
        <div className="flex h-[62px] shrink-0 border-t border-[#7c7c7c] bg-[#fcfcfc]">
          <CoverageCell side="left" data={left} />
          <div className="my-[6px] w-px bg-[#7c7c7c]" />
          <CoverageCell side="right" data={right} />
        </div>
      </div>
    </section>
  );
}

/* ---------- trace lines between panels ---------- */

type Link = { from: number; to: number | "hidden"; tone: "strong" | "weak" | "thin" };

const requirementLinks: Link[] = [
  { from: 9, to: 6, tone: "weak" },
  { from: 13, to: 16, tone: "weak" },
  { from: 13, to: 17, tone: "weak" },
  { from: 13, to: 18, tone: "weak" },
  { from: 13, to: 19, tone: "weak" },
  { from: 14, to: 16, tone: "weak" },
  { from: 15, to: 17, tone: "weak" },
  { from: 16, to: 20, tone: "weak" },
  { from: 17, to: 21, tone: "weak" },
  { from: 18, to: 22, tone: "weak" },
  { from: 22, to: "hidden", tone: "thin" },
  { from: 23, to: "hidden", tone: "thin" },
  ...[5, 7, 8, 10, 11, 12, 13, 14, 24, 25].map((to): Link => ({ from: 8, to, tone: "strong" })),
];

const resultLinks: Link[] = [
  { from: 6, to: 8, tone: "weak" },
  ...[16, 17, 18, 19, 20, 21, 22].map((from): Link => ({ from, to: from + 2, tone: "weak" })),
  ...[5, 7, 8, 10, 11, 12, 13, 14].map((from): Link => ({ from, to: from + 2, tone: "strong" })),
  { from: 24, to: "hidden", tone: "strong" },
  { from: 25, to: "hidden", tone: "strong" },
];

const tones = {
  strong: { color: "#0078b4", width: 2.4 },
  weak: { color: "#d3d3d3", width: 2.4 },
  thin: { color: "#d3d3d3", width: 1.2 },
};

function TraceLines({ width, links }: { width: number; links: Link[] }) {
  const rowY = (i: number) => 57 + i * 25;
  const hiddenY = 698;
  return (
    <svg width={width} height="788" viewBox={`0 0 ${width} 788`} fill="none" aria-hidden="true">
      <g fill="#ffc0cb" stroke="#9b1c1c" strokeWidth="2">
        <path d={`M7 ${hiddenY - 6}h12v12H7z`} />
        <path d={`M${width - 19} ${hiddenY - 6}h12v12h-12z`} />
      </g>
      <path d={`M13 ${hiddenY}H${width - 13}`} stroke="#d3d3d3" />
      {links.map((l, i) => (
        <path
          key={i}
          d={`M0 ${rowY(l.from)}L${l.to === "hidden" ? `${width - 13} ${hiddenY}` : `${width} ${rowY(l.to)}`}`}
          stroke={tones[l.tone].color}
          strokeWidth={tones[l.tone].width}
        />
      ))}
    </svg>
  );
}

function Editor() {
  return (
    <main className="flex min-w-0 flex-1 flex-col">
      <div className="flex h-[30px] shrink-0 items-stretch border-b-2 border-[#2b579a] whitespace-nowrap">
        <a href="#" className="flex w-[204px] items-center gap-[6px] pl-[6px]">
          <ItemIcon icon="model" />
          ADAS ECU制御ソフトウェア
        </a>
        <a href="#" className="flex w-[122px] items-center gap-[6px] pl-[6px]">
          <ItemIcon icon="brown" />
          APPレイヤ
        </a>
        <div className="flex w-[108px] items-center gap-[6px] bg-[#2b579a] pl-[7px] text-white">
          <svg width="20" height="20" viewBox="0 0 20 20" fill="none" stroke="#d5dde8" strokeWidth="1.600" aria-hidden="true">
            <path d="M1 3h6v5H1zM1 12h6v5H1zM13 1h5v4h-5zM13 8h5v4h-5zM13 15h5v4h-5zM7 5h3l3-2M7 6l6 4M7 15l3-5h3M7 15l6 2" />
          </svg>
          <span className="flex-1">トレース</span>
          <button type="button" aria-label="閉じる" className="mr-[7px]">
            <svg width="13" height="13" viewBox="0 0 13 13" stroke="#d5dde8" strokeWidth="1.500" aria-hidden="true">
              <path d="M1 1l11 11M12 1L1 12" />
            </svg>
          </button>
        </div>
        <button type="button" aria-label="タブ一覧" className="mr-[5px] ml-auto">
          <Chevron dir="down" color="#777" size={11} />
        </button>
      </div>
      <div className="flex h-[40px] shrink-0 items-center border-t border-[#c4c4c4] bg-[#e1e1e1] pl-[6px]">
        <span className="w-[80px]">表示対象：</span>
        <button type="button" className="flex h-[29px] w-[343px] items-center border border-[#ababab] bg-white pr-[7px] pl-[6px] whitespace-nowrap">
          <svg width="18" height="18" viewBox="0 0 18 18" fill="none" stroke="#777" strokeWidth="1.600" className="mr-[5px]" aria-hidden="true">
            <path d="M1 1h6v5H1zM4 6v8.500h7M4 8.500h7M11 6h6v4h-6zM11 13h6v4h-6z" />
          </svg>
          <span className="flex-1 text-left">ソフトウェア要求～ソフトウェアテスト～テスト結果</span>
          <svg width="10" height="6" viewBox="0 0 10 6" className="shrink-0" aria-hidden="true">
            <path d="M0 0h10L5 5.500z" fill="#bdbdbd" />
          </svg>
        </button>
        <button type="button" aria-label="表示設定" className="ml-[10px]">
          <svg width="20" height="20" viewBox="0 0 20 20" fill="none" stroke="#666" strokeWidth="1.600" aria-hidden="true">
            <path d="M3 10V2h16v15h-8" />
            <path d="M2 3h17" strokeWidth="2.500" />
            <path d="M6 7h3v3H6zM12 6h4v3h-4zM12 12h4v2h-4zM9 8.500h2v4h2" strokeWidth="1.200" />
            <circle cx="5.500" cy="15" r="3" />
            <path d="M5.500 10.500v9M1 15h9M2.500 12l6 6M8.500 12l-6 6" strokeWidth="1.200" />
            <circle cx="5.500" cy="15" r="1.500" fill="#e1e1e1" stroke="none" />
          </svg>
        </button>
      </div>
      <div className="flex min-h-0 flex-1 flex-col bg-white font-['DejaVu_Sans','Noto_Sans_CJK_JP',sans-serif]">
        <div className="grid min-h-0 flex-1 grid-cols-[472fr_187px_388fr_160px_344fr] pr-[94px] pl-[11px]">
          <TracePanel
            icon="folder"
            title="ソフトウェア要求分析"
            rows={requirements}
            thumb={165}
            hits={[50]}
            left={{ text: "なし" }}
            right={{ text: "60%", value: 60, low: true }}
          />
          <TraceLines width={187} links={requirementLinks} />
          <TracePanel
            icon="group"
            title="テストケースグループ"
            rows={testCases}
            thumb={235}
            hits={[45, 60, 70, 90, 100, 110, 115, 125, 220, 230]}
            left={{ text: "100%", value: 100 }}
            right={{ text: "100%", value: 100 }}
          />
          <TraceLines width={160} links={resultLinks} />
          <TracePanel
            icon="group"
            title="テスト結果グループ"
            rows={testResults}
            thumb={255}
            hits={[70, 90, 100, 120, 130, 140, 150, 160, 260, 270]}
            left={{ text: "100%", value: 100 }}
            right={{ text: "なし" }}
          />
        </div>
        <div className="flex h-[31px] shrink-0 items-center justify-between px-[7px] pt-[12px]">
          <svg width="6" height="10" viewBox="0 0 6 10" aria-hidden="true">
            <path d="M5 0v10L0 5z" fill="#777" />
          </svg>
          <svg width="6" height="10" viewBox="0 0 6 10" aria-hidden="true">
            <path d="M1 0v10L6 5z" fill="#777" />
          </svg>
        </div>
      </div>
    </main>
  );
}

/* ---------- status bar ---------- */

function StatusBar() {
  return (
    <footer className="flex h-[35px] shrink-0 items-center border-t border-[#c8cacc] bg-[#e2e3e5] font-['DejaVu_Sans',sans-serif] text-[15px] whitespace-nowrap text-[#1c1c1c]">
      <div className="ml-[9px] flex h-[21px] items-center gap-[6px] border border-[#ababab] bg-[#ececee] px-[7px] text-[#9c9c9c]">
        <svg width="16" height="17" viewBox="0 0 16 17" fill="#666" aria-hidden="true">
          <path d="M0 3q0-3 8-3t8 3v1q0 2-8 2T0 4z" />
          <path d="M0 6q2 1.800 8 1.800T16 6v2.500q0 2-8 2t-8-2z" />
          <path d="M0 11q2 1.800 8 1.800t8-1.800v2.500q0 3-8 3t-8-3z" />
        </svg>
        Sales-Demo-Environments
      </div>
      <svg width="14" height="16" viewBox="0 0 14 16" fill="none" stroke="#666" strokeWidth="1.800" className="ml-[20px]" aria-hidden="true">
        <circle cx="3" cy="3" r="2" />
        <circle cx="3" cy="13" r="2" />
        <circle cx="11" cy="4" r="2" />
        <path d="M3 5v6M11 6q0 3-4 3H3" />
      </svg>
      <span className="ml-[6px]">main_/nd-v5-demo_/svn-nproj</span>
      <button type="button" aria-label="同期" className="ml-[24px]">
        <svg width="18" height="16" viewBox="0 0 18 16" fill="none" stroke="#666" strokeWidth="2" aria-hidden="true">
          <path d="M2 7q1-5 7-5 4 0 6 3M16 1v5h-5M16 9q-1 5-7 5-4 0-6-3M2 15v-5h5" />
        </svg>
      </button>
      <svg width="14" height="16" viewBox="0 0 14 16" fill="none" stroke="#666" strokeWidth="2.200" className="ml-[10px]" aria-hidden="true">
        <path d="M7 1v12M1.500 8L7 13.500 12.500 8" />
      </svg>
      <span className="ml-[6px]">0</span>
      <svg width="14" height="16" viewBox="0 0 14 16" fill="none" stroke="#666" strokeWidth="2.200" className="ml-[6px]" aria-hidden="true">
        <path d="M7 15V3M1.500 8L7 2.500 12.500 8" />
      </svg>
      <span className="ml-[6px]">0</span>

      <div className="ml-auto flex items-center gap-[14px]">
        <button type="button" aria-label="ナビゲータ" className="flex h-[26px] w-[26px] items-center justify-center rounded-t border border-b-0 border-[#b8b8b8] bg-[#f2f2f2]">
          <svg width="20" height="18" viewBox="0 0 20 18" fill="#fff" stroke="#8a8a8a" strokeWidth="1.500" aria-hidden="true">
            <path d="M1 1h18v16H1z" />
            <path d="M1 1h18v3H1z" fill="#8a8a8a" />
            <path d="M2 5h4v11H2z" fill="#c5ddf5" stroke="none" />
            <path d="M6.500 4v13" />
          </svg>
        </button>
        <button type="button" aria-label="下ペイン">
          <svg width="20" height="18" viewBox="0 0 20 18" fill="#fff" stroke="#8a8a8a" strokeWidth="1.500" aria-hidden="true">
            <path d="M1 1h18v16H1z" />
            <path d="M1 1h18v3H1z" fill="#8a8a8a" />
            <path d="M2 11h16v5H2z" fill="#c5ddf5" stroke="none" />
            <path d="M1 10.500h18" />
          </svg>
        </button>
        <button type="button" aria-label="右ペイン" disabled>
          <svg width="20" height="18" viewBox="0 0 20 18" fill="#e8e8ea" stroke="#c4c4c6" strokeWidth="1.500" aria-hidden="true">
            <path d="M1 1h18v16H1z" />
            <path d="M1 1h18v3H1z" fill="#c4c4c6" />
            <path d="M10 4v13" />
          </svg>
        </button>
        <button type="button" aria-label="インスペクタ">
          <svg width="20" height="20" viewBox="0 0 20 20" fill="#f2f2f2" stroke="#888" strokeWidth="1.300" aria-hidden="true">
            <path d="M1 5l8-4 9 5-8 6z" fill="#ddd" />
            <path d="M5 3l9 6M5 8l8-5" />
            <path d="M1 6l8 6v2l-8-5zM5 12l4 3v4l-4-3z" fill="#999" />
            <path d="M8 16l8-9 4 3-7 8-5 2z" fill="#888" stroke="#e2e3e5" />
          </svg>
        </button>
        <button type="button" aria-label="表示オプション">
          <svg width="20" height="19" viewBox="0 0 20 19" fill="none" stroke="#707070" strokeWidth="1.500" aria-hidden="true">
            <path d="M9 16H1V2h18v8" fill="#f4f4f4" />
            <path d="M1 2h18" strokeWidth="3" />
            <circle cx="14" cy="13" r="3" strokeWidth="2" />
            <path d="M14 8v2M14 16v2M9 13h2M17 13h2M10.500 9.500l1.500 1.500M16 15l1.500 1.500M17.500 9.500L16 11M12 15l-1.500 1.500" />
          </svg>
        </button>
      </div>
      <button type="button" aria-label="縮小" className="ml-[83px]">
        <svg width="14" height="14" viewBox="0 0 14 14" stroke="#999" strokeWidth="1.500" aria-hidden="true">
          <path d="M1 6.500h12" />
        </svg>
      </button>
      <input
        type="range"
        aria-label="ズーム"
        min="0"
        max="100"
        defaultValue="3"
        className="mx-[14px] h-4 w-[126px] appearance-none bg-transparent [&::-webkit-slider-runnable-track]:h-px [&::-webkit-slider-runnable-track]:bg-[#777] [&::-webkit-slider-thumb]:-mt-[7px] [&::-webkit-slider-thumb]:h-[14px] [&::-webkit-slider-thumb]:w-[6px] [&::-webkit-slider-thumb]:appearance-none [&::-webkit-slider-thumb]:bg-[#999]"
      />
      <button type="button" aria-label="拡大">
        <svg width="14" height="14" viewBox="0 0 14 14" stroke="#999" strokeWidth="1.500" aria-hidden="true">
          <path d="M1 6.500h12M7 1v12" />
        </svg>
      </button>
      <button type="button" aria-label="全体を表示" className="ml-[23px]">
        <svg width="20" height="20" viewBox="0 0 20 20" fill="#b0b0b0" aria-hidden="true">
          <path d="M10 0l4 4.500h-2.500V7h-3V4.500H6zM10 20l4-4.500h-2.500V13h-3v2.500H6zM0 10l4.500-4v2.500H7v3H4.500V14zM20 10l-4.500-4v2.500H13v3h2.500V14z" />
        </svg>
      </button>
      <svg width="14" height="14" viewBox="0 0 14 14" fill="#999" className="mt-[10px] mr-[5px] ml-[14px]" aria-hidden="true">
        <path d="M10 0h3v3h-3zM10 5h3v3h-3zM10 10h3v3h-3zM5 5h3v3H5zM5 10h3v3H5zM0 10h3v3H0z" />
      </svg>
    </footer>
  );
}

export default function App() {
  return (
    <div className="h-screen bg-[#d9dce3] font-['Noto_Sans','Noto_Sans_CJK_JP',sans-serif] text-[14px] text-[#1c1c1c] [font-feature-settings:'palt']">
      <div className="flex h-full w-full flex-col overflow-hidden rounded-[10px] border border-t-0 border-[#2b579a] bg-[#efefef]">
        <TitleBar />
        <Ribbon />
        <div className="flex min-h-0 flex-1">
          <Navigator />
          <Editor />
        </div>
        <StatusBar />
      </div>
    </div>
  );
}
